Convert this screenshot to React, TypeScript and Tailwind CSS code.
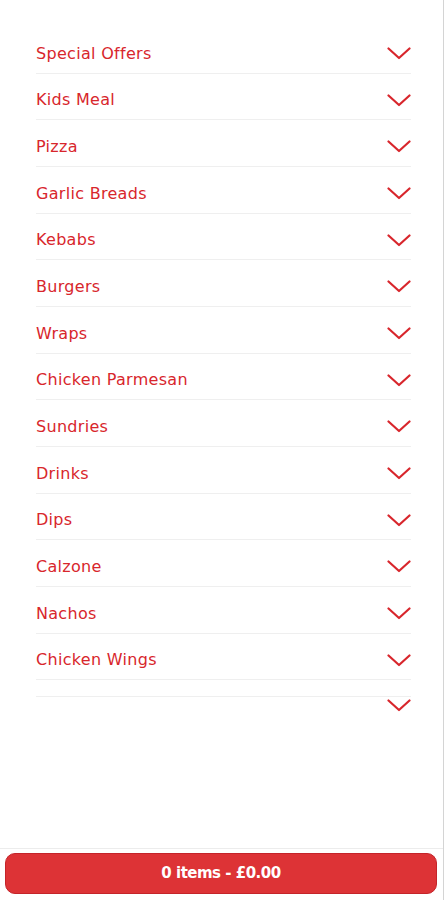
import React from "react";

const categories = [
  "Special Offers",
  "Kids Meal",
  "Pizza",
  "Garlic Breads",
  "Kebabs",
  "Burgers",
  "Wraps",
  "Chicken Parmesan",
  "Sundries",
  "Drinks",
  "Dips",
  "Calzone",
  "Nachos",
  "Chicken Wings",
];

function Chevron() {
  return (
    <svg width="24" height="13" viewBox="0 0 24 13" fill="none" className="shrink-0">
      <polyline
        points="1.5,1.5 12,11 22.5,1.5"
        stroke="#d8262c"
        strokeWidth="2.2"
        strokeLinecap="round"
        strokeLinejoin="round"
      />
    </svg>
  );
}

export default function App() {
  return (
    <div
      className="flex flex-col h-screen w-[444px] bg-white border-r border-[#d4d4d4]"
      style={{ fontFamily: '"DejaVu Sans", "Noto Sans", sans-serif' }}
    >
      {/* Menu categories */}
      <div className="flex-1 pl-[36px] pr-[32px] pt-[27px]">
        {categories.map((name) => (
          <div
            key={name}
            className="flex items-center justify-between pt-[14.67px] pb-[7px] border-b border-[#efefef]"
          >
            <span className="text-[16px] leading-6 text-[#d8262c] tracking-[0.3px]">{name}</span>
            <Chevron />
          </div>
        ))}
        <div className="mt-[16px] border-t border-[#efefef] flex justify-end pt-[2px]">
          <Chevron />
        </div>
      </div>

      {/* Basket bar */}
      <div className="border-t border-[#ececec] pl-[5px] pr-[6px] pt-[4px] pb-[6px]">
        <button className="w-full h-[41px] rounded-[10px] bg-[#dd3336] border border-[#c4242a] text-white font-bold text-[15px] tracking-[-0.5px]">
          0 items - £0.00
        </button>
      </div>
    </div>
  );
}
